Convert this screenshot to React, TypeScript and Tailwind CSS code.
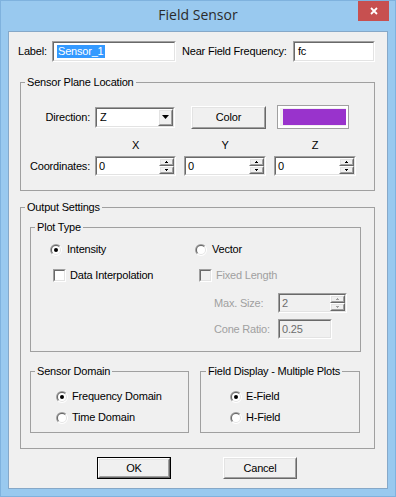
import React from 'react'

// classic 3D edges
const sunkOuter = 'border border-t-[#a0a0a0] border-l-[#a0a0a0] border-b-white border-r-white'
const sunkInner = 'h-full w-full border border-t-[#696969] border-l-[#696969] border-b-[#e3e3e3] border-r-[#e3e3e3]'
const raisedOuter = 'border border-t-white border-l-white border-b-[#696969] border-r-[#696969]'
const raisedInner = 'h-full w-full border border-t-[#e3e3e3] border-l-[#e3e3e3] border-b-[#a0a0a0] border-r-[#a0a0a0] bg-[#f0f0f0]'

function Edit({ className, disabled = false, children }: { className: string; disabled?: boolean; children?: React.ReactNode }) {
  return (
    <div className={`${sunkOuter} ${className}`}>
      <div className={`${sunkInner} flex items-center ${disabled ? 'bg-[#f0f0f0] text-[#6d6d6d]' : 'bg-white'}`}>{children}</div>
    </div>
  )
}

function Arrow({ up = false, disabled = false, big = false }: { up?: boolean; disabled?: boolean; big?: boolean }) {
  const fill = disabled ? '#a0a0a0' : '#000'
  if (big) {
    return (
      <svg width="7" height="4" viewBox="0 0 7 4">
        <path d="M0 0 H7 L3.5 4 Z" fill={fill} />
      </svg>
    )
  }
  // tiny pixel arrows, 3x2
  return (
    <svg width="3" height="2" viewBox="0 0 3 2" shapeRendering="crispEdges">
      {up ? (
        <>
          <rect x="1" y="0" width="1" height="1" fill={fill} />
          <rect x="0" y="1" width="3" height="1" fill={fill} />
        </>
      ) : (
        <>
          <rect x="0" y="0" width="3" height="1" fill={fill} />
          <rect x="1" y="1" width="1" height="1" fill={fill} />
        </>
      )}
    </svg>
  )
}

function SpinBtn({ up = false, disabled = false }: { up?: boolean; disabled?: boolean }) {
  return (
    <div className={`${raisedOuter} h-1/2 w-full`}>
      <div className={`${raisedInner} flex items-center justify-center`}>
        <Arrow up={up} disabled={disabled} />
      </div>
    </div>
  )
}

function Spin({ className, value, disabled = false }: { className: string; value: string; disabled?: boolean }) {
  return (
    <Edit className={className} disabled={disabled}>
      <span className="flex-1 pl-[2px]">{value}</span>
      <div className="flex h-full w-[15px] flex-col">
        <SpinBtn up disabled={disabled} />
        <SpinBtn disabled={disabled} />
      </div>
    </Edit>
  )
}

function Radio({ checked = false }: { checked?: boolean }) {
  return (
    <svg width="12" height="12" viewBox="0 0 12 12" className="shrink-0">
      <path d="M1.757 10.243 A6 6 0 0 1 10.243 1.757 Z" fill="#a0a0a0" />
      <path d="M10.243 1.757 A6 6 0 0 1 1.757 10.243 Z" fill="#ffffff" />
      <path d="M2.464 9.536 A5 5 0 0 1 9.536 2.464 Z" fill="#696969" />
      <path d="M9.536 2.464 A5 5 0 0 1 2.464 9.536 Z" fill="#e3e3e3" />
      <circle cx="6" cy="6" r="4" fill="#fff" />
      {checked && <circle cx="6" cy="6" r="2" fill="#000" />}
    </svg>
  )
}

function Check({ disabled = false }: { disabled?: boolean }) {
  return <Edit className="h-[13px] w-[13px] shrink-0" disabled={disabled} />
}

function Btn({ className, children, isDefault = false }: { className: string; children: React.ReactNode; isDefault?: boolean }) {
  const face = (
    <div className={`${raisedOuter} h-full w-full`}>
      <div className={`${raisedInner} flex items-center justify-center`}>{children}</div>
    </div>
  )
  return isDefault ? <div className={`border border-black ${className}`}>{face}</div> : <div className={className}>{face}</div>
}

export default function App() {
  return (
    <div className="flex h-[497px] w-[396px] flex-col border border-[#7fb2de] bg-[#99c9ef] font-['Liberation_Sans',Arial,sans-serif] text-[11px] leading-[13px] tracking-[-0.2px] text-black">
      {/* title bar */}
      <div className="flex h-[30px] shrink-0 items-start">
        <div className="w-[37px]" />
        <div className="flex-1 pt-[5px] text-center font-['Segoe_UI','Open_Sans',sans-serif] text-[14px] leading-[18px] tracking-normal text-[#2b2b2b]">
          Field Sensor
        </div>
        <div className="w-[37px]">
          <div className="flex h-[20px] w-[31px] items-center justify-center bg-[#c75050]">
            <svg width="8" height="8" viewBox="0 0 8 8">
              <path d="M1 1 L7 7 M7 1 L1 7" stroke="#fff" strokeWidth="1.8" />
            </svg>
          </div>
        </div>
      </div>

      {/* client area */}
      <div className="mx-[7px] flex h-[458px] flex-col border border-[#86a8c8] bg-[#f0f0f0]">
        <div className="ml-[9px] mt-[9px] flex h-[21px] items-center">
          <span className="w-[34px]">Label:</span>
          <Edit className="h-[21px] w-[124px]">
            <span className="ml-[3px] bg-[#3399ff] px-[1px] text-white">Sensor_1</span>
          </Edit>
          <span className="ml-[6px] w-[111px]">Near Field Frequency:</span>
          <Edit className="h-[21px] w-[82px]">
            <span className="pl-[3px]">fc</span>
          </Edit>
        </div>

        <fieldset className="ml-[11px] mt-[14px] h-[115px] w-[355px] border border-[#a0a0a0]">
          <legend className="ml-[4px] px-[2px]">Sensor Plane Location</legend>
          <div className="mt-[16px] flex h-[24px] items-center">
            <span className="w-[69px] text-right">Direction:</span>
            <Edit className="ml-[5px] h-[21px] w-[80px]">
              <span className="flex-1 pl-[3px]">Z</span>
              <div className={`${raisedOuter} h-full w-[15px]`}>
                <div className={`${raisedInner} flex items-center justify-center`}>
                  <Arrow big />
                </div>
              </div>
            </Edit>
            <Btn className="ml-[16px] h-[23px] w-[75px]">Color</Btn>
            <div className="ml-[11px] h-[24px] w-[72px] border border-[#a0a0a0]">
              <div className="h-full w-full border-2 border-white bg-[#f0f0f0] pb-[1px] pl-[3px] pt-[1px]">
                <div className="h-[16px] w-[63px] bg-[#9933cc]" />
              </div>
            </div>
          </div>
          <div className="mt-[10px] flex gap-[8px] pl-[74px]">
            <span className="w-[81px] text-center">X</span>
            <span className="w-[82px] text-center">Y</span>
            <span className="w-[82px] text-center">Z</span>
          </div>
          <div className="mt-[4px] flex h-[20px] items-center gap-[8px]">
            <span className="mr-[-3px] w-[69px] text-right">Coordinates:</span>
            <Spin className="h-[20px] w-[81px]" value="0" />
            <Spin className="h-[20px] w-[82px]" value="0" />
            <Spin className="h-[20px] w-[82px]" value="0" />
          </div>
        </fieldset>

        <fieldset className="ml-[11px] mt-[10px] h-[248px] w-[355px] border border-[#a0a0a0]">
          <legend className="ml-[4px] px-[2px]">Output Settings</legend>

          <fieldset className="ml-[9px] mt-[7px] h-[131px] w-[331px] border border-[#a0a0a0]">
            <legend className="ml-[4px] px-[2px]">Plot Type</legend>
            <div className="mt-[9px] flex h-[13px] items-center">
              <div className="ml-[19px] flex w-[145px] items-center gap-[5px]">
                <Radio checked />
                <span>Intensity</span>
              </div>
              <div className="flex items-center gap-[5px]">
                <Radio />
                <span>Vector</span>
              </div>
            </div>
            <div className="mt-[13px] flex h-[13px] items-center">
              <div className="ml-[22px] flex w-[146px] items-center gap-[4px]">
                <Check />
                <span>Data Interpolation</span>
              </div>
              <div className="flex items-center gap-[4px] text-[#a0a0a0]">
                <Check disabled />
                <span>Fixed Length</span>
              </div>
            </div>
            <div className="mt-[11px] flex h-[20px] items-center">
              <span className="ml-[183px] w-[64px] text-[#a0a0a0]">Max. Size:</span>
              <Spin className="h-[20px] w-[69px]" value="2" disabled />
            </div>
            <div className="mt-[6px] flex h-[20px] items-center">
              <span className="ml-[183px] w-[64px] text-[#a0a0a0]">Cone Ratio:</span>
              <Edit className="h-[20px] w-[54px]" disabled>
                <span className="pl-[2px]">0.25</span>
              </Edit>
            </div>
          </fieldset>

          <div className="ml-[9px] mt-[13px] flex gap-[11px]">
            <fieldset className="h-[68px] w-[159px] border border-[#a0a0a0]">
              <legend className="ml-[4px] px-[2px]">Sensor Domain</legend>
              <div className="ml-[25px] mt-[12px] flex h-[13px] items-center gap-[4px]">
                <Radio checked />
                <span>Frequency Domain</span>
              </div>
              <div className="ml-[25px] mt-[8px] flex h-[13px] items-center gap-[4px]">
                <Radio />
                <span>Time Domain</span>
              </div>
            </fieldset>
            <fieldset className="h-[68px] w-[160px] border border-[#a0a0a0]">
              <legend className="ml-[5px] px-[2px]">Field Display - Multiple Plots</legend>
              <div className="ml-[29px] mt-[12px] flex h-[13px] items-center gap-[4px]">
                <Radio checked />
                <span>E-Field</span>
              </div>
              <div className="ml-[29px] mt-[8px] flex h-[13px] items-center gap-[4px]">
                <Radio />
                <span>H-Field</span>
              </div>
            </fieldset>
          </div>
        </fieldset>

        <div className="mt-[8px] flex justify-center gap-[52px] pr-[2px]">
          <Btn className="h-[22px] w-[74px]" isDefault>
            OK
          </Btn>
          <Btn className="h-[22px] w-[74px]">Cancel</Btn>
        </div>
      </div>
    </div>
  )
}
